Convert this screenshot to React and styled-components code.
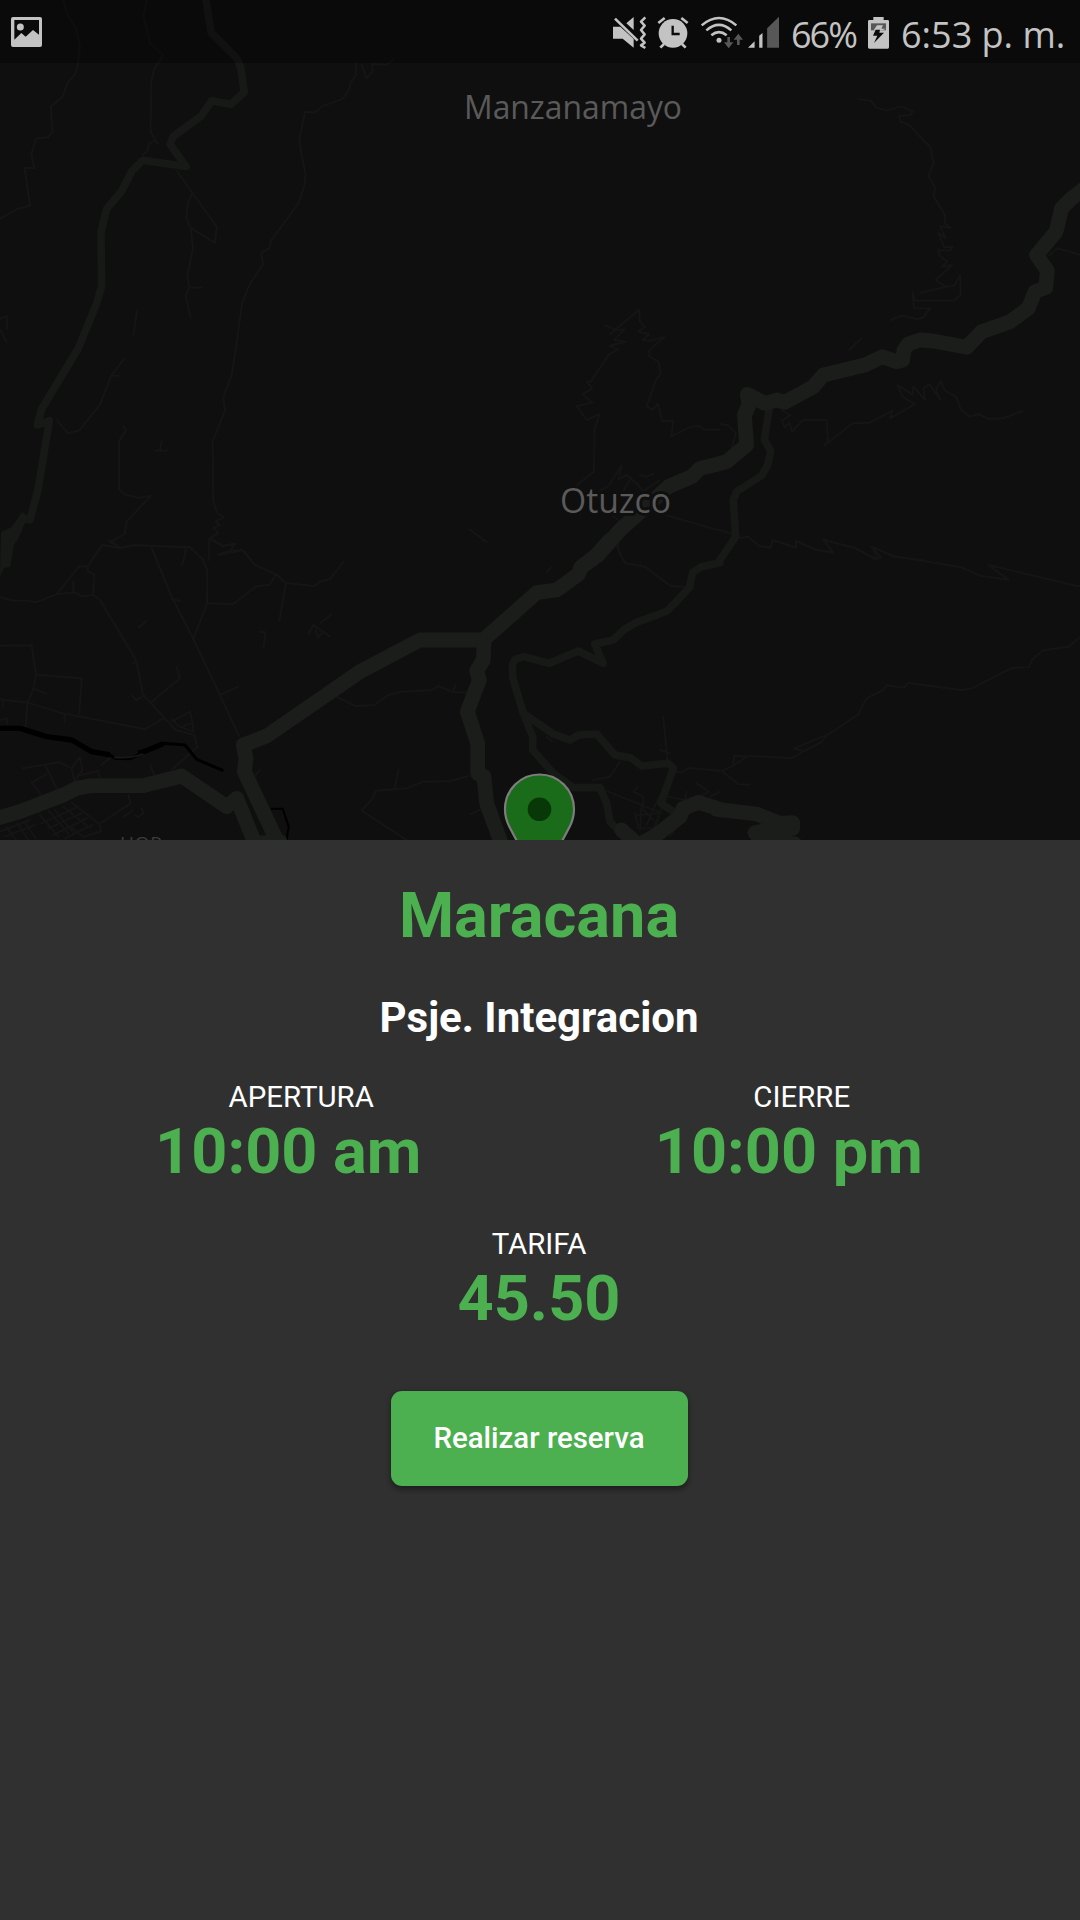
import React from "react";
import styled, { createGlobalStyle } from "styled-components";

const GlobalStyle = createGlobalStyle`
  * { box-sizing: border-box; }
  body {
    margin: 0;
    background: #303030;
    font-family: Roboto, "Liberation Sans", sans-serif;
  }
`;

const Screen = styled.main`
  width: 1080px;
  height: 1920px;
  display: flex;
  flex-direction: column;
  overflow: hidden;
  background: #303030;
`;

const MapArea = styled.section`
  position: relative;
  flex: 0 0 840px;
  overflow: hidden;
  background: #0f0f0f;
`;

const MapDrawing = styled.svg`
  display: block;
  width: 1080px;
  height: 840px;
`;

const StatusBar = styled.header`
  position: absolute;
  inset: 0 0 auto 0;
  height: 63px;
  padding: 0 15px 0 11px;
  display: flex;
  align-items: flex-start;
  justify-content: space-between;
  background: rgba(0, 0, 0, 0.3);
`;

const StatusGroup = styled.div`
  display: flex;
  align-items: flex-start;
`;

const StatusIcon = styled.svg`
  display: block;
  width: ${(p) => p.$w}px;
  height: 36px;
  margin: 14px ${(p) => p.$after || 0}px 0 0;
  flex: none;
  overflow: visible;
`;

const StatusText = styled.span`
  width: ${(p) => p.$w}px;
  margin: ${(p) => p.$top}px ${(p) => p.$after || 0}px 0 0;
  font: 400 36px/44px "Open Sans", "Noto Sans", sans-serif;
  letter-spacing: ${(p) => p.$track}px;
  white-space: pre;
  color: #c3c3c3;
`;

const Panel = styled.section`
  flex: 1;
  display: flex;
  flex-direction: column;
  align-items: center;
  padding: 39px 2px 0 0;
`;

const Title = styled.h1`
  margin: 0;
  font-size: 63px;
  line-height: 74px;
  font-weight: 700;
  color: #4caf50;
`;

const Address = styled.h2`
  margin: 40px 0 0;
  font-size: 42px;
  line-height: 49px;
  font-weight: 700;
  color: #fff;
`;

const Hours = styled.div`
  width: 100%;
  padding: 0 39px 0 38px;
  margin-top: 38px;
  display: grid;
  grid-template-columns: 1fr 1fr;
`;

const Field = styled.div`
  display: flex;
  flex-direction: column;
  align-items: center;
`;

const Label = styled.span`
  padding-left: ${(p) => p.$indent || 0}px;
  font-size: 29.4px;
  line-height: 35px;
  color: #fff;
`;

const Value = styled.strong`
  font-size: 63px;
  line-height: 74px;
  font-weight: 700;
  color: #4caf50;
`;

const Rate = styled(Field)`
  margin-top: 38px;
`;

const ReserveButton = styled.button`
  width: 297px;
  height: 95px;
  margin-top: 55px;
  border: 0;
  border-radius: 11px;
  background: #4caf50;
  color: #fff;
  font: 500 29.4px/35px Roboto, sans-serif;
  box-shadow: 0 4px 5px rgba(0, 0, 0, 0.28), 0 1px 6px rgba(0, 0, 0, 0.16);
`;

const MINOR = "#151515";
const MID = "#171917";
const MAJOR = "#1b1d1a";

const tiles = [
  {
    transform: "scale(0.33333 0.35714)",
    minor: [
      "190,0 202,40 228,80 240,130 234,180 226,207 203,232 187,272 152,298 158,368 145,384 108,388 94,432 103,471 74,470 90,576 50,586 0,612",
      "440,0 431,45 450,120 490,155 462,195 453,235 452,370 474,404", "466,393 446,402 444,420 428,434",
      "530,478 650,635 645,680 572,638 559,610 563,570 577,540", "572,638 579,695 562,770 568,806 604,806", "568,806 557,828 572,890",
      "1068,178 1067,212 1053,230 1045,255 1028,277 965,298 944,315 915,313 898,390 904,430 917,490 913,520 895,570 812,675 808,695 784,708 789,740 747,800 726,850 710,960 695,1050 670,1112 675,1150 638,1235 640,1405 652,1437 672,1448 646,1460 660,1470 640,1478 655,1492 628,1508 668,1530 705,1522 690,1542 655,1552",
      "628,1508 627,1568", "690,1542 727,1539 755,1568",
      "374,1003 333,1053 300,1133 238,1205 203,1213 170,1175", "333,1053 360,1052", "411,870 401,937",
      "370,1193 378,1204 357,1236 357,1370 373,1384 415,1394 452,1389 380,1460 374,1495 330,1518 360,1532",
      "275,1568 305,1527 360,1534 405,1527 570,1533 612,1568", "455,1533 470,1568", "558,1535 552,1568",
      "485,1235 480,1262", "464,1262 502,1262", "0,893 20,885 22,920", "0,922 20,957",
    ],
    mid: ["618,0 633,90 712,165 722,190 733,258 692,292 635,282 603,325 520,382 510,403 558,466 428,449 395,480 365,535 320,585 303,650 305,800 290,850 235,975 125,1145 112,1190 148,1178 130,1280 113,1375 90,1455 68,1450 45,1490 28,1505"],
    major: [],
  },
  {
    transform: "translate(360 60) scale(0.33333)",
    minor: [
      "5,14 20,55 38,35 36,12 80,14 98,0",
      "650,1275 702,1235 703,1110 719,1062 680,1080 650,1038 698,1028 667,1003 697,985 680,965 693,964 747,883 775,868 748,858 797,845 762,840 793,808 762,812 837,749 840,785 855,800 835,815 868,823 848,840 870,842 913,832 868,870 868,890 895,905 902,940 888,960 860,1038 877,1050 893,1031 907,1083 940,1083 934,1130 992,1100 1020,1098 1032,1109 1080,1109",
      "735,797 765,807 750,823", "715,1295 745,1278 785,1217 775,1258 800,1245 838,1278 848,1295 898,1262", "790,1293 815,1252", "840,1245 860,1250 882,1240",
      "918,1366 1080,1412", "754,1365 775,1380 772,1460 790,1500", "328,1408 378,1445",
    ],
    mid: [], major: [],
  },
  {
    transform: "translate(720 60) scale(0.33333)",
    minor: [
      "415,118 453,122 468,142 500,152 543,139 580,154 570,166 537,167 541,184 566,194 631,262 641,310 625,347 646,385 640,408 675,465 676,491 692,504 660,498 677,535 655,518 673,562 698,560 690,572 655,570 657,585 682,605 665,620 696,615 647,660 677,680 603,698",
      "677,680 702,678 720,645 722,704 702,722 585,722 577,697 582,744 630,745 610,773 590,778 546,766 513,780",
      "387,870 425,835", "185,1050 212,1066 185,1082 195,1103 207,1087 217,1115 248,1080 320,1080 324,1145 314,1155 398,1090 450,1088 518,1052 510,1075 585,1033 548,1010 533,975 577,1004 580,978 615,1020 610,985 628,973 660,1018 648,988 662,963 673,990 710,1012 722,1048 750,1070 777,1062 805,1077 850,1075 907,1053",
      "0,1092 25,1096 48,1120 35,1165", "0,1410 38,1422", "60,1434 85,1430 120,1460 152,1464 158,1440 228,1464 228,1443 290,1470 340,1477 310,1438 405,1466 475,1498 455,1460 520,1490 610,1500", "988,586 1013,565 1080,584",
    ],
    mid: ["150,1030 133,1140 152,1172 143,1215 125,1247 50,1295 40,1320 47,1430 0,1500"],
    major: ["1100,380 1055,415 1025,445 1008,515 950,585 982,632 977,683 945,695 925,745 870,785 785,815 740,862 640,843 600,840 565,852 552,870 548,900 530,905 487,890 435,915 310,945 280,980 195,1027 170,1020 135,1030 82,1003 87,1035 73,1065 80,1155 20,1205 -5,1212 -60,1225 -85,1250 -155,1280 -180,1303 -300,1410 -365,1485 -420,1525"],
  },
  {
    transform: "translate(0 540) scale(0.33333)",
    minor: [
      "0,172 40,182 82,182 108,187 170,163 238,78 262,80 308,15 360,25 405,15 570,22 605,55 622,90 621,190 580,297", "262,80 264,94 282,103 280,165 247,169 225,157 170,163", "220,125 220,160", "280,165 300,180 405,355 412,375 428,462 492,533 527,570 583,585 592,622 518,686", "398,370 410,365", "397,466 408,481 428,470",
      "455,485 540,415 530,382", "558,24 553,55 545,75", "455,24 515,170 580,297 660,465 717,588", "660,465 714,440", "515,178 540,182",
      "621,190 698,193 770,138 808,135 828,103 858,129 942,138 960,125 990,117 1030,66", "858,129 838,242", "655,45 727,31 765,75 828,103", "327,0 350,15 360,25", "640,0 668,17 705,11 688,36",
      "0,317 95,316 108,404 245,415 238,522", "108,404 100,446 83,488 76,568", "100,446 138,460", "0,478 83,488 180,518 435,568 492,533", "515,545 570,515 578,548 540,562 515,537", "578,548 580,575 540,560", "10,480 8,502", "0,540 20,535 22,550", "193,522 194,545", "415,262 440,243", "777,275 796,277 791,322",
      "925,283 940,255 965,272 990,290", "947,268 953,292 970,277", "960,250 995,223", "68,685 178,667 215,685 240,650 247,690 224,725", "215,685 224,725", "135,675 172,750", "230,707 295,693 300,712", "95,728 140,702", "95,728 124,765", "304,675 330,653", "450,675 463,705", "370,830 398,812", "425,805 430,820 415,832 405,825",
      "385,765 392,790 298,852 304,873 250,891 210,860", "120,825 175,890", "145,812 205,880", "165,810 222,882", "215,788 298,852", "190,800 270,865", "125,850 235,800", "145,865 245,820", "160,885 260,835", "195,895 277,855", "0,875 90,840", "15,890 105,855", "20,862 48,900", "52,850 85,900", "72,845 108,895", "1010,470 1065,498 1080,498", "762,710 780,690",
    ],
    mid: [],
    major: ["1450,300 1260,300 1080,395 800,588 730,615 738,655 733,695 825,890 840,940", "-20,838 60,815 190,765 230,745 270,737 430,737 545,708 680,800 710,775 765,910 840,905"],
  },
  {
    transform: "translate(360 540) scale(0.33333)",
    minor: [
      "0,497 43,495 85,465 125,455 215,450 235,438 275,455 320,458", "280,452 287,435", "5,812 38,775 48,752 140,745 190,725 270,723 325,708", "105,745 115,690", "5,812 140,900", "330,823 370,805", "560,95 575,82", "365,0 380,5", "770,0 778,40 797,70 855,80 930,137 980,141",
      "910,530 922,660", "900,630 930,640", "950,695 965,698 985,684 1080,692", "780,665 750,710 700,720", "720,745 895,815", "560,590 575,603", "835,740 820,755 850,770 850,810 880,840", "825,820 835,865 885,865 900,820", "845,790 840,870", "860,855 895,775", "880,865 910,795", "830,825 900,820", "900,765 975,780 980,755", "1010,730 1045,755 1020,770", "1050,770 1080,755", "930,890 965,840",
    ],
    mid: ["1080,68 1025,80 998,98 988,143 922,213 830,247 793,268 760,300 704,312 730,370 655,333 568,370 492,350 465,358 457,375 458,412 490,520 518,590 518,630 580,700 640,743 720,743 740,790 750,845 785,880", "490,520 580,582 630,600 655,585 710,582 765,645 812,653 845,678 925,670 940,685 903,790 940,815"],
    major: ["750,0 710,45 665,80 655,103 590,150 530,158 370,300", "372,310 370,360 350,392 358,420 322,515 353,610 353,700 372,710 380,790 420,900 430,940", "785,870 835,915 890,885 960,830 970,805 1015,787 1080,808"],
  },
  {
    transform: "translate(720 540) scale(0.33333)",
    minor: [
      "95,0 120,18 152,22 158,0 228,22 228,3 290,30 340,38 310,0 405,23 465,58 483,52 455,20 520,48 725,82 780,107 865,119 805,75 1070,138 1080,137",
      "1080,292 1045,320 970,331 935,360 927,382 875,384 760,443 728,451 565,429 552,443 500,436 490,450 440,475 415,523 330,580 222,626 252,633 215,655 140,650 43,648 38,677 5,693 55,732 88,734", "252,633 305,606 320,586", "38,677 78,652",
    ],
    mid: [],
    major: ["-10,808 110,822 180,850 218,848 218,865 145,870 105,878 120,895 225,912"],
  },
];

const riverWide = "0,565 60,565 140,590 215,600 275,635 330,645";
const riverTail = "330,645 345,655 390,656 430,638 490,610 555,615 590,658 670,692";

function Roads({ kind, color, width }) {
  return tiles.map((tile) => (
    <g key={kind + tile.transform} transform={tile.transform} fill="none" stroke={color} strokeWidth={width} strokeLinejoin="round" strokeLinecap="round">
      {tile[kind].map((points) => (
        <polyline key={points} points={points} vectorEffect="non-scaling-stroke" />
      ))}
    </g>
  ));
}

function RoadMap() {
  const label = { fontFamily: '"Open Sans", "Noto Sans", sans-serif', fill: "#5a5a5a" };
  return (
    <MapDrawing viewBox="0 0 1080 840">
      <Roads kind="minor" color={MINOR} width={2} />
      <g transform="translate(0 540) scale(0.33333)" fill="none" stroke="#000" strokeLinejoin="round">
        <polyline points={riverWide} strokeWidth="16" />
        <polyline points={riverTail} strokeWidth="9" />
        <polyline points="415,640 440,632 490,611" strokeWidth="16" />
        <polyline points="812,806 848,806 866,860 860,900" strokeWidth="6" />
        <path d="M342 652 Q392 656 430 642" stroke="#181818" strokeWidth="5" />
      </g>
      <Roads kind="mid" color={MID} width={7.6} />
      <path d="M1 532L12 527L22 512L28 516L19 537L14 545L10 567L4 568L0 577Z" fill={MID} />
      <Roads kind="major" color={MAJOR} width={14.8} />
      <g stroke="#0f0f0f" strokeWidth="6" strokeLinejoin="round" paintOrder="stroke">
        <text {...label} x="464" y="119" fontSize="32" textLength="218" lengthAdjust="spacingAndGlyphs">Manzanamayo</text>
        <text {...label} x="560" y="513" fontSize="34" textLength="111" lengthAdjust="spacingAndGlyphs">Otuzco</text>
      </g>
      <text {...label} fill="#3c3c3c" x="120" y="849.5" fontSize="19" textLength="42">HOR</text>
      <path d="M539.5 884L509 826C506 820 505 815 505 809A34.5 34.5 0 0 1 574 809C574 815 573 820 570 826Z" fill="#1a6b1a" stroke="#7d7d7d" strokeWidth="2.2" />
      <circle cx="539.5" cy="809.3" r="11.8" fill="#083808" />
    </MapDrawing>
  );
}

const ICON = "#c3c3c3";
const DIM = "#575757";

const GalleryIcon = () => (
  <StatusIcon $w={31} viewBox="33 42 93 108">
    <path fillRule="evenodd" fill={ICON} d="M39 51H120Q126 51 126 57V135Q126 141 120 141H39Q33 141 33 135V57Q33 51 39 51ZM43 60V119L64 99L77 110L99 90L117 104V60Z" />
    <circle cx="61" cy="81" r="10.5" fill={ICON} />
  </StatusIcon>
);

const MutedIcon = () => (
  <StatusIcon $w={34} $after={11} viewBox="39 42 102 108">
    <path fill={ICON} d="M39 80H61L101 117V143L68 116H39ZM79 70L101 51V90Z" />
    <path fill="none" stroke={ICON} strokeWidth="8" d="M45 56L113 122" />
    <path fill="none" stroke={ICON} strokeWidth="7.5" strokeLinejoin="round" d="M136 52L123 65L134 77L123 90L134 103L123 116L134 128L123 136L136 144" />
  </StatusIcon>
);

const AlarmIcon = () => (
  <StatusIcon $w={30} $after={13} viewBox="174 42 90 108">
    <circle cx="219" cy="100" r="43" fill={ICON} />
    <path fill="none" stroke={ICON} strokeWidth="8" d="M175 69L194 54M263 69L244 54M192 132L181 143M246 132L257 143" />
    <path fill="none" stroke="#0b0b0b" strokeWidth="7" d="M218 77V102H239" />
  </StatusIcon>
);

const WifiIcon = () => (
  <StatusIcon $w={42} $after={5} viewBox="303 42 126 108">
    <g fill="none" stroke={ICON} strokeWidth="7.5">
      <path d="M305 76Q357 32 409 76" />
      <path d="M319 91Q357 58 394 91" />
      <path d="M334 106Q357 87 380 106" />
    </g>
    <circle cx="357" cy="121" r="7.5" fill={ICON} />
    <path fill={DIM} d="M382 111H390V127H400L386 145L372 127H382ZM411 135V119H401L415 101L429 119H419V135Z" />
  </StatusIcon>
);

const SignalIcon = () => (
  <StatusIcon $w={31} $after={12} viewBox="446 42 94 108">
    <path fill={ICON} d="M446 144L466 124V144ZM480 107L490 99V144H480Z" />
    <path fill={DIM} d="M504 85L540 50V144H504Z" />
  </StatusIcon>
);

const BatteryIcon = () => (
  <StatusIcon $w={21} $after={12} viewBox="807 42 63 108">
    <path fill={ICON} d="M823 51H854V60H866Q870 60 870 64V142Q870 146 866 146H811Q807 146 807 142V64Q807 60 811 60H823Z" />
    <path fill={DIM} d="M816 70H861V91H816Z" />
    <path fill={ICON} d="M834 76H852L847 86H861L850 91H824Z" />
    <path fill="#0b0b0b" d="M830 89H843L841 98H855L825 129L835 107H822Z" />
  </StatusIcon>
);

export default function App() {
  return (
    <Screen>
      <GlobalStyle />
      <MapArea>
        <RoadMap />
        <StatusBar>
          <StatusGroup>
            <GalleryIcon />
          </StatusGroup>
          <StatusGroup>
            <MutedIcon />
            <AlarmIcon />
            <WifiIcon />
            <SignalIcon />
            <StatusText $w={66} $after={11} $top={13} $track={-2}>66%</StatusText>
            <BatteryIcon />
            <StatusText $w={164} $top={13} $track={0}>6:53 p. m.</StatusText>
          </StatusGroup>
        </StatusBar>
      </MapArea>
      <Panel>
        <Title>Maracana</Title>
        <Address>Psje. Integracion</Address>
        <Hours>
          <Field>
            <Label $indent={26}>APERTURA</Label>
            <Value>10:00 am</Value>
          </Field>
          <Field>
            <Label $indent={26}>CIERRE</Label>
            <Value>10:00 pm</Value>
          </Field>
        </Hours>
        <Rate>
          <Label>TARIFA</Label>
          <Value>45.50</Value>
        </Rate>
        <ReserveButton type="button">Realizar reserva</ReserveButton>
      </Panel>
    </Screen>
  );
}
